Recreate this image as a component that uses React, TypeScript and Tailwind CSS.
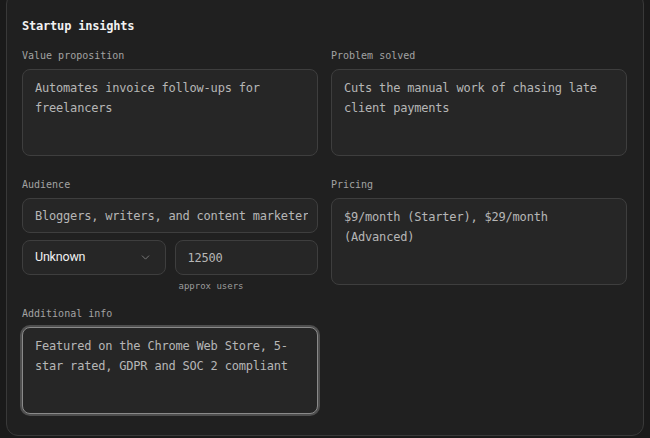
import { ChevronDown } from "lucide-react";

const mono = "font-['DejaVu_Sans_Mono',monospace]";

function Label({ children }: { children: React.ReactNode }) {
  return (
    <div className={`${mono} text-[10px] leading-[16px] text-[#a3a3a3] mb-[5px]`}>
      {children}
    </div>
  );
}

function Area({ value, focused = false }: { value: string; focused?: boolean }) {
  return (
    <textarea
      readOnly
      autoFocus={focused}
      defaultValue={value}
      className={`${mono} block w-full h-[87px] resize-none rounded-lg bg-[#262626] px-3 pt-2 text-[12px] leading-5 tracking-[-0.2px] text-[#b6b6b6] outline-none border ${
        focused ? "border-[#8a8a8a] ring-2 ring-[#4e4e4e]" : "border-[#3e3e3e]"
      }`}
    />
  );
}

export default function App() {
  return (
    <div className="min-h-[438px] bg-[#1a1a1a] overflow-hidden">
      <div className="mx-[6px] w-[638px] -mt-[8px] rounded-xl border border-[#393939] bg-[#202020] pl-[15px] pr-[16px] pt-[23px] pb-[21px]">
        <h2 className={`${mono} font-bold text-[12px] leading-5 tracking-[-0.2px] text-[#f2f2f2] mb-[12px]`}>
          Startup insights
        </h2>

        <div className="grid grid-cols-2 gap-x-[13px]">
          <div className="flex flex-col">
            <Label>Value proposition</Label>
            <Area value="Automates invoice follow-ups for freelancers" />

            <div className="mt-[21px]">
              <Label>Audience</Label>
              <input
                readOnly
                defaultValue="Bloggers, writers, and content marketers"
                className={`${mono} block w-full h-[35px] rounded-lg border border-[#3e3e3e] bg-[#262626] pl-3 pr-[9px] text-[12px] tracking-[-0.2px] text-[#b6b6b6] outline-none`}
              />
              <div className="grid grid-cols-2 gap-[9px] mt-[7px]">
                <button className="flex h-[35px] items-center justify-between rounded-lg border border-[#3e3e3e] bg-[#262626] pl-3 pr-[13px] font-['Roboto',sans-serif] text-[12.5px] tracking-[-0.2px] text-[#f0f0f0]">
                  Unknown
                  <ChevronDown size={13} strokeWidth={1.5} className="text-[#8a8a8a]" />
                </button>
                <div>
                  <input
                    readOnly
                    defaultValue="12500"
                    className={`${mono} block w-full h-[35px] rounded-lg border border-[#3e3e3e] bg-[#262626] px-3 text-[12px] tracking-[-0.2px] text-[#b6b6b6] outline-none`}
                  />
                  <div className={`${mono} mt-[5px] pl-[4px] text-[9px] leading-[12px] text-[#9c9c9c]`}>
                    approx users
                  </div>
                </div>
              </div>
            </div>

            <div className="mt-[14px]">
              <Label>Additional info</Label>
              <Area
                focused
                value="Featured on the Chrome Web Store, 5-star rated, GDPR and SOC 2 compliant"
              />
            </div>
          </div>

          <div className="flex flex-col">
            <Label>Problem solved</Label>
            <Area value="Cuts the manual work of chasing late client payments" />
            <div className="mt-[21px]">
              <Label>Pricing</Label>
              <Area value="$9/month (Starter), $29/month (Advanced)" />
            </div>
          </div>
        </div>
      </div>
    </div>
  );
}
